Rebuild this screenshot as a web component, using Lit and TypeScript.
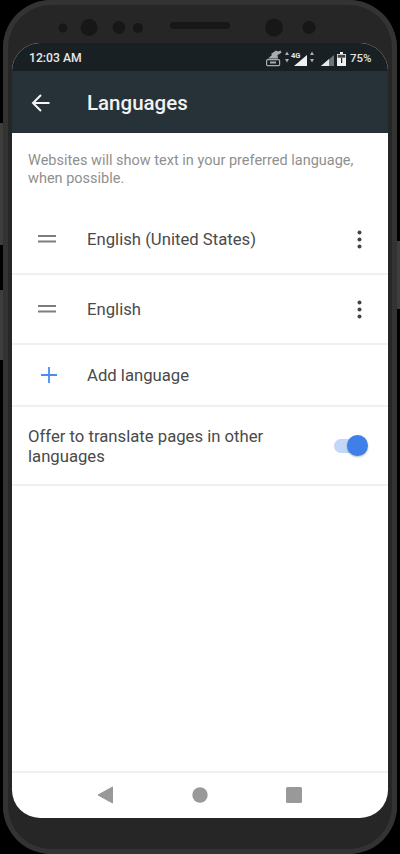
import { LitElement, html, css } from "lit";
import { customElement } from "lit/decorators.js";

@customElement("app-root")
export class AppRoot extends LitElement {
  static styles = css`
    :host { display: block; position: relative; width: 400px; height: 854px; background: #000; font-family: Roboto, "Liberation Sans", sans-serif; overflow: hidden; }
    * { box-sizing: border-box; }
    .btn { position: absolute; width: 3px; background: #3d3d3d; }
    .btn.l1 { left: 0; top: 123px; height: 122px; }
    .btn.l2 { left: 0; top: 290px; height: 70px; }
    .btn.r1 { right: 0; top: 241px; height: 68px; }
    .phone { position: relative; width: 394px; height: 854px; margin-left: 3px; background: #262626; border-radius: 48px; box-shadow: inset 0 0 0 5px #333; padding: 43px 9px 36px; display: flex; flex-direction: column; }
    .top { position: absolute; left: 0; top: 0; width: 100%; height: 43px; display: block; }
    .screen { position: relative; flex: 1; display: flex; flex-direction: column; background: #fff; border-radius: 28px; overflow: hidden; }
    .status { height: 28px; background: #182024; display: flex; align-items: center; justify-content: space-between; padding: 2px 16px 0 17px; color: #e8e8e8; font-size: 12.2px; font-weight: 500; flex: none; }
    .status svg { display: block; }
    .appbar { height: 62px; background: #263238; display: flex; align-items: center; color: #f2f2f2; flex: none; padding-top: 1px; }
    .appbar .ic { width: 75px; display: flex; padding-left: 19px; }
    .appbar .title { font-size: 20.5px; font-weight: 500; }
    .desc { padding: 19px 16px 0; font-size: 14.5px; line-height: 17.5px; color: #8f8f8f; height: 72px; flex: none; }
    .row { display: flex; align-items: center; border-bottom: 2px solid #f0f0f0; color: #4a4a4a; font-size: 16.7px; flex: none; }
    .row.first { height: 70px; }
    .row.lang { height: 70px; }
    .row.add { height: 62px; }
    .row .lead { width: 75px; display: flex; justify-content: center; padding-right: 5px; }
    .row.add .lead { padding-right: 1px; }
    .row .grow { flex: 1; }
    .row .more { width: 57px; display: flex; justify-content: center; }
    .offer { height: 79px; padding: 0 20px 0 16px; justify-content: space-between; }
    .offer .txt { width: 290px; line-height: 20px; padding-top: 3px; }
    .switch { position: relative; width: 34px; height: 22px; flex: none; }
    .track { position: absolute; left: 0; top: 4px; width: 30px; height: 14px; border-radius: 7px; background: #c2d6f8; }
    .thumb { position: absolute; right: 0; top: 0; width: 21px; height: 21px; border-radius: 50%; background: #3f7fe8; box-shadow: 0 1px 2px rgba(0,0,0,.3); }
    .spacer { flex: 1; }
    .nav { height: 47px; border-top: 2px solid #f0f0f0; display: flex; align-items: center; justify-content: center; flex: none; padding-bottom: 1px; }
    .nav div { width: 94px; display: flex; justify-content: center; }
    .nav .back { padding-right: 3px; }
  `;

  render() {
    return html`<div class="btn l1"></div><div class="btn l2"></div><div class="btn r1"></div>
    <div class="phone">
      <svg class="top" viewBox="0 0 394 43">
        <circle cx="60" cy="28" r="4.5" fill="#171717"/>
        <circle cx="86" cy="27.5" r="8.5" fill="#171717"/>
        <circle cx="116" cy="27.5" r="6.5" fill="#171717"/>
        <circle cx="135" cy="28" r="5" fill="#171717"/>
        <rect x="167" y="22" width="60" height="7" rx="3.5" fill="#171717"/>
        <circle cx="271" cy="27.5" r="9" fill="#171717"/>
        <circle cx="306" cy="27.5" r="6.5" fill="#171717"/>
      </svg>
      <div class="screen">
        <div class="status">
          <span>12:03 AM</span>
          <svg width="106" height="18" viewBox="0 0 106 18">
            <g fill="#a9adae">
              <rect x="0.6" y="10.6" width="13" height="6" rx="1" fill="none" stroke="#a9adae" stroke-width="1.2"/>
              <path d="M2 9.500l4-3.500-1-1 5-3.500 2 1 2.500-1 1 2-2 1.500-2 1 .5 3.500z"/>
              <path d="M4 12.500h6v2H4z"/>
              <path d="M19 6l2-3.500 2 3.500zM19 10l2 3.500 2-3.500z"/>
              <path d="M44 6l2-3.500 2 3.500zM44 10l2 3.500 2-3.500z"/>
            </g>
            <path d="M28 17L41 6v11z" fill="#f0f0f0"/>
            <text x="25" y="8.500" font-size="7.500" font-weight="700" fill="#e8e8e8" font-family="Roboto, sans-serif">4G</text>
            <path d="M55 17L68 6v11z" fill="#6f7375"/>
            <path d="M55 17l8-7v7z" fill="#e8e8e8"/>
            <path d="M71 5h3V3h3v2h3v12h-9z" fill="#f0f0f0"/>
            <path d="M71.700 5.700h7.600v3h-7.600z" fill="#40484c"/>
            <path d="M75 9h1.200v5H75z" fill="#182024"/>
            <text x="84" y="13" font-size="11.500" font-weight="500" fill="#e0e0e0" font-family="Roboto, sans-serif">75%</text>
          </svg>
        </div>
        <div class="appbar">
          <div class="ic">
            <svg width="20" height="20" viewBox="0 0 20 20" fill="none" stroke="#f5f5f5" stroke-width="2"><path d="M18.500 10H2M10 2l-8 8 8 8"/></svg>
          </div>
          <div class="title">Languages</div>
        </div>
        <div class="desc">Websites will show text in your preferred language, when possible.</div>
        <div class="row first">
          <div class="lead">${this.drag()}</div>
          <div class="grow">English (United States)</div>
          <div class="more">${this.dots()}</div>
        </div>
        <div class="row lang">
          <div class="lead">${this.drag()}</div>
          <div class="grow">English</div>
          <div class="more">${this.dots()}</div>
        </div>
        <div class="row add">
          <div class="lead">
            <svg width="16" height="16" viewBox="0 0 16 16" stroke="#4c8bf0" stroke-width="1.800"><path d="M8 0v16M0 8h16"/></svg>
          </div>
          <div class="grow">Add language</div>
        </div>
        <div class="row offer">
          <div class="txt">Offer to translate pages in other languages</div>
          <div class="switch"><div class="track"></div><div class="thumb"></div></div>
        </div>
        <div class="spacer"></div>
        <div class="nav">
          <div class="back"><svg width="16" height="18" viewBox="0 0 16 18" fill="#999"><path d="M15.500 1v16L1 9z" stroke="#999" stroke-linejoin="round"/></svg></div>
          <div><svg width="16" height="16" viewBox="0 0 16 16" fill="#999"><circle cx="8" cy="8" r="7.700"/></svg></div>
          <div><svg width="16" height="16" viewBox="0 0 16 16" fill="#999"><rect width="16" height="16" rx="1.500"/></svg></div>
        </div>
      </div>
    </div>`;
  }

  drag() {
    return html`<svg width="18" height="8" viewBox="0 0 18 8" fill="#7d7d7d"><rect width="18" height="2"/><rect y="5.500" width="18" height="2"/></svg>`;
  }
  dots() {
    return html`<svg width="5" height="19" viewBox="0 0 5 19" fill="#444"><circle cx="2.500" cy="2.500" r="2"/><circle cx="2.500" cy="9.500" r="2"/><circle cx="2.500" cy="16.500" r="2"/></svg>`;
  }
}
